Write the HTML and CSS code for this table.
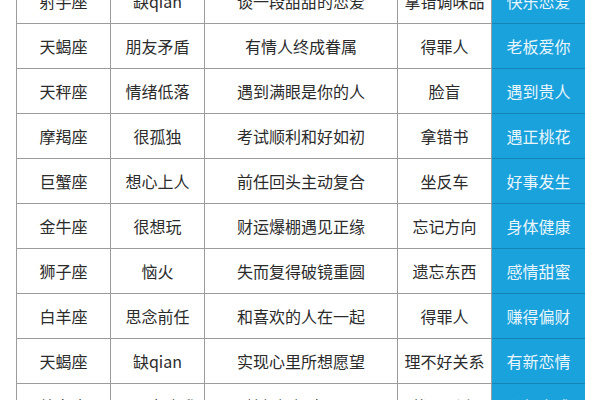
FILE: index.html
```html
<!DOCTYPE html>
<html lang="zh">
<head>
<meta charset="utf-8">
<link rel="stylesheet" href="styles.css">
</head>
<body>
<div class="table">
  <div class="cell">射手座</div><div class="cell">缺qian</div><div class="cell">谈一段甜甜的恋爱</div><div class="cell">拿错调味品</div><div class="cell hl">快乐恋爱</div>
  <div class="cell">天蝎座</div><div class="cell">朋友矛盾</div><div class="cell">有情人终成眷属</div><div class="cell">得罪人</div><div class="cell hl">老板爱你</div>
  <div class="cell">天秤座</div><div class="cell">情绪低落</div><div class="cell">遇到满眼是你的人</div><div class="cell">脸盲</div><div class="cell hl">遇到贵人</div>
  <div class="cell">摩羯座</div><div class="cell">很孤独</div><div class="cell">考试顺利和好如初</div><div class="cell">拿错书</div><div class="cell hl">遇正桃花</div>
  <div class="cell">巨蟹座</div><div class="cell">想心上人</div><div class="cell">前任回头主动复合</div><div class="cell">坐反车</div><div class="cell hl">好事发生</div>
  <div class="cell">金牛座</div><div class="cell">很想玩</div><div class="cell">财运爆棚遇见正缘</div><div class="cell">忘记方向</div><div class="cell hl">身体健康</div>
  <div class="cell">狮子座</div><div class="cell">恼火</div><div class="cell">失而复得破镜重圆</div><div class="cell">遗忘东西</div><div class="cell hl">感情甜蜜</div>
  <div class="cell">白羊座</div><div class="cell">思念前任</div><div class="cell">和喜欢的人在一起</div><div class="cell">得罪人</div><div class="cell hl">赚得偏财</div>
  <div class="cell">天蝎座</div><div class="cell">缺qian</div><div class="cell">实现心里所想愿望</div><div class="cell">理不好关系</div><div class="cell hl">有新恋情</div>
  <div class="cell">处女座</div><div class="cell">心里有点乱</div><div class="cell">梦想慢慢实现了</div><div class="cell">找不到人</div><div class="cell hl">心想事成</div>
</div>
</body>
</html>
```

FILE: styles.css
```css
html, body {
  margin: 0;
  padding: 0;
  background: #ffffff;
  overflow: hidden;
}
body {
  width: 600px;
  height: 400px;
  font-family: "Noto Sans CJK SC", "Noto Sans", sans-serif;
}
.table {
  margin: -22px 0 0 16px;
  width: 568px;
  display: grid;
  grid-template-columns: 93px 93px 192px 93px 93px;
  grid-auto-rows: 44px;
  gap: 1px;
  padding: 1px 0 1px 1px;
  background: #9c9c9c;
}
.cell {
  background: #ffffff;
  color: #2b2b2b;
  font-size: 16px;
  display: flex;
  align-items: center;
  justify-content: center;
  white-space: nowrap;
}
.cell.hl {
  background: #19a2dc;
  color: #eaf6fc;
  box-shadow: 0 1px 0 #1583b8;
}
```
